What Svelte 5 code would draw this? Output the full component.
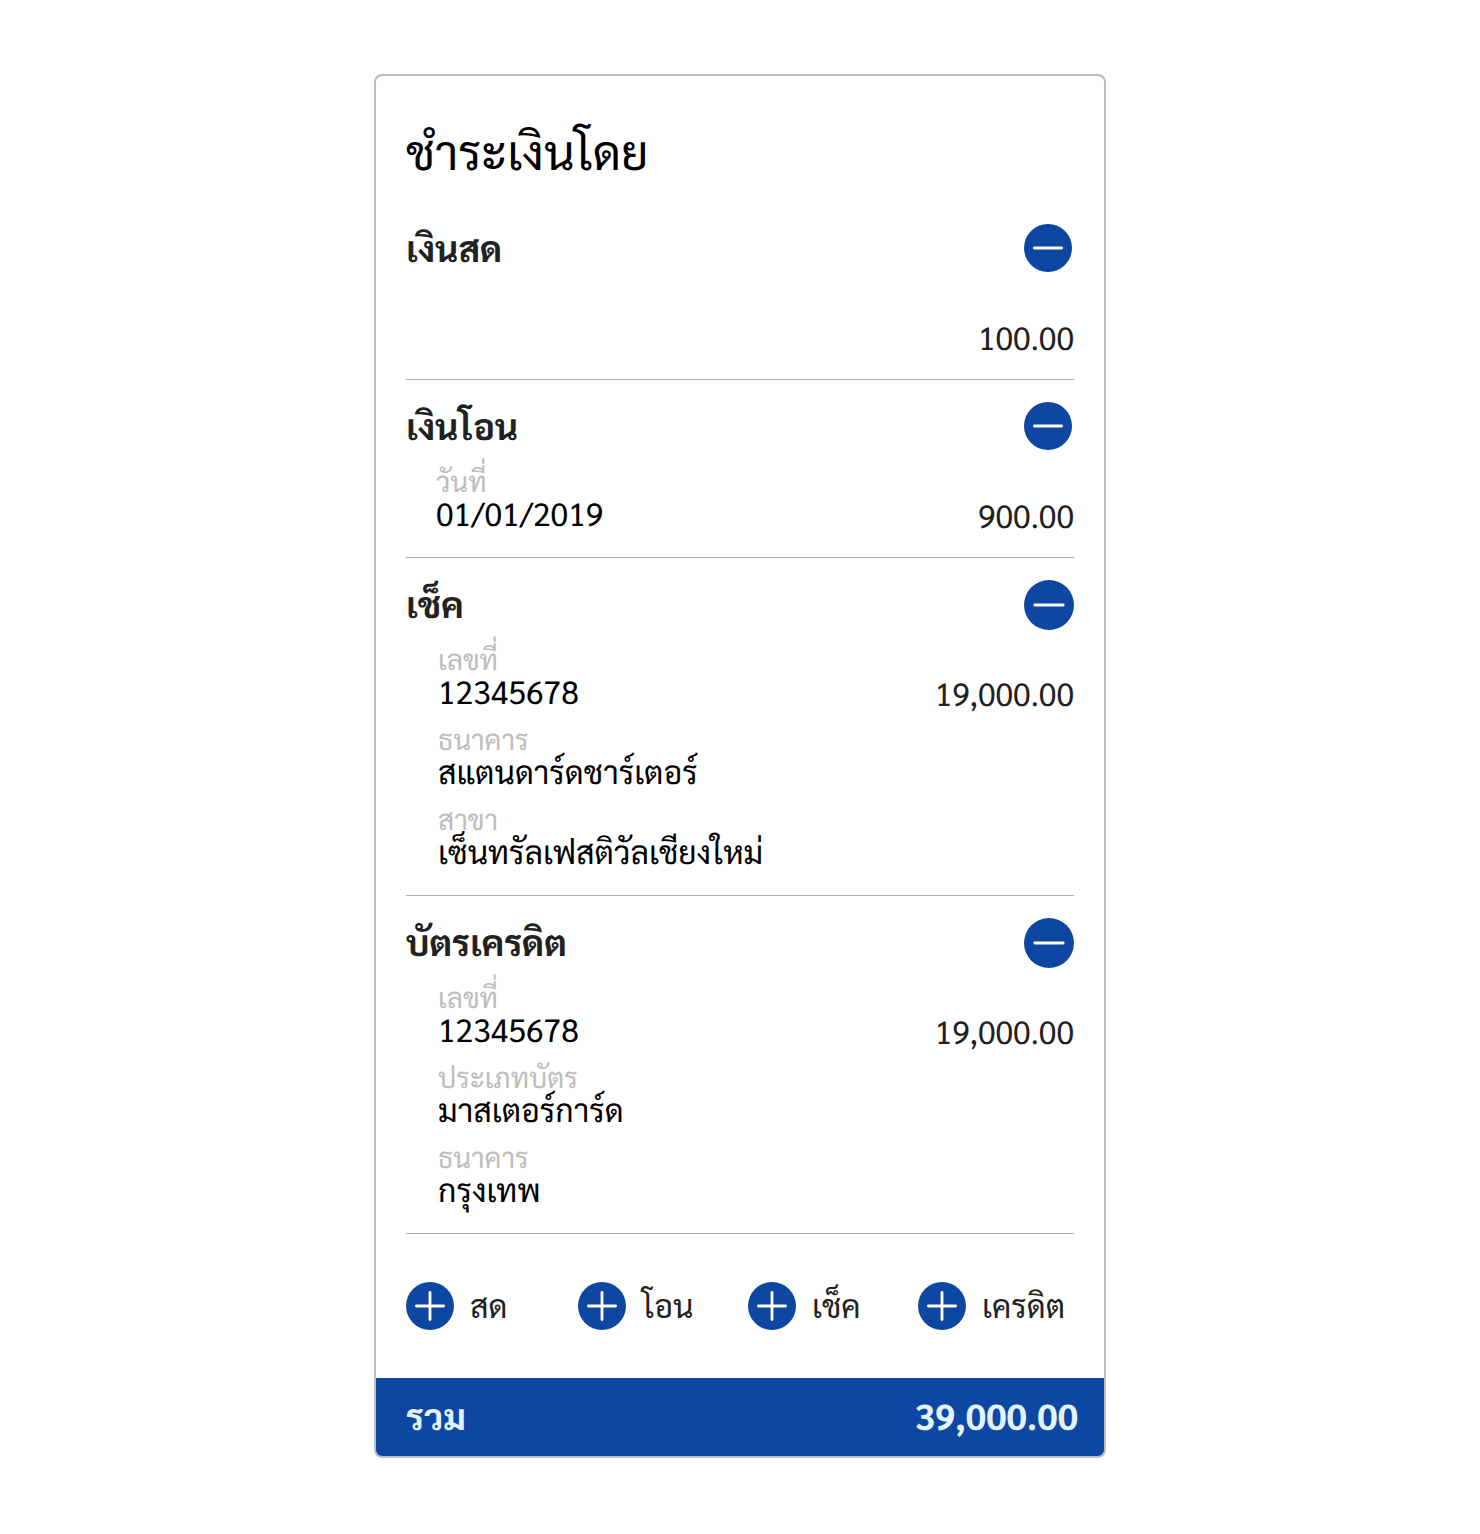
<script>
  const sections = [
    { title: 'เงินสด', kind: 'cash', amount: '100.00', size: 48, fields: [] },
    {
      title: 'เงินโอน', kind: 'transfer', amount: '900.00', size: 48,
      fields: [{ label: 'วันที่', value: '01/01/2019' }]
    },
    {
      title: 'เช็ค', kind: 'cheque', amount: '19,000.00', size: 50,
      fields: [
        { label: 'เลขที่', value: '12345678' },
        { label: 'ธนาคาร', value: 'สแตนดาร์ดชาร์เตอร์' },
        { label: 'สาขา', value: 'เซ็นทรัลเฟสติวัลเชียงใหม่' }
      ]
    },
    {
      title: 'บัตรเครดิต', kind: 'credit', amount: '19,000.00', size: 50,
      fields: [
        { label: 'เลขที่', value: '12345678' },
        { label: 'ประเภทบัตร', value: 'มาสเตอร์การ์ด' },
        { label: 'ธนาคาร', value: 'กรุงเทพ' }
      ]
    }
  ];
  const actions = ['สด', 'โอน', 'เช็ค', 'เครดิต'];
</script>

{#snippet icon(plus, size)}
  <svg width={size} height={size} viewBox="0 0 48 48" aria-hidden="true">
    <circle cx="24" cy="24" r="24" fill="#0d47a1" />
    <path d={plus ? 'M10.4 24H37.6M24 10.4V37.6' : 'M10.4 24H37.6'} stroke="#fff" stroke-width="2.8" stroke-linecap="round" />
  </svg>
{/snippet}

<main class="page">
  <div class="card">
    <h1>ชำระเงินโดย</h1>
    {#each sections as s}
      <section class={s.kind}>
        <header>
          <h2>{s.title}</h2>
          <button class="round" class:small={s.size === 48} aria-label="ลบ">{@render icon(false, s.size)}</button>
        </header>
        <div class="body">
          <dl>
            {#each s.fields as f}
              <div class="field">
                <dt>{f.label}</dt>
                <dd>{f.value}</dd>
              </div>
            {/each}
          </dl>
          <span class="amount">{s.amount}</span>
        </div>
      </section>
    {/each}
    <nav>
      {#each actions as a}
        <button class="add">{@render icon(true, 48)}<span>{a}</span></button>
      {/each}
    </nav>
    <footer><span>รวม</span><span>39,000.00</span></footer>
  </div>
</main>

<style>
  :global(body) { margin: 0; background: #fff; }
  .page {
    box-sizing: border-box;
    height: 1534px;
    padding-top: 74px;
    font-family: Sarabun, "Noto Sans Thai Looped", "Noto Sans Thai", "Noto Sans CJK SC", sans-serif;
    color: #212121;
    text-rendering: geometricPrecision;
  }
  .card {
    box-sizing: border-box;
    width: 732px;
    height: 1384px;
    margin: 0 auto;
    border: 2px solid #bdbdbd;
    border-radius: 8px;
    overflow: hidden;
    white-space: nowrap;
  }
  h1, h2, dl, dd { margin: 0; }
  button { border: 0; padding: 0; background: none; font: inherit; color: inherit; }
  svg { display: block; }
  h1 {
    height: 126px;
    padding-left: 30px;
    box-sizing: border-box;
    color: #000;
    font-size: 48px;
    font-weight: 400;
    line-height: 150px;
  }
  section {
    box-sizing: border-box;
    margin: 0 30px;
    height: 178px;
    padding-top: 22px;
    border-bottom: 1px solid #b0b0b0;
  }
  .cheque, .credit { height: 338px; }
  header { display: flex; justify-content: space-between; align-items: flex-start; height: 50px; }
  h2 { font-size: 36px; line-height: 48px; font-weight: 700; }
  .small { margin-right: 2px; }
  .body { display: flex; justify-content: space-between; }
  dl { padding-left: 32px; }
  .transfer dl { padding-left: 30px; }
  .field { height: 80px; }
  dt { height: 32px; line-height: 58px; font-size: 28px; color: #bdbdbd; }
  dd { height: 48px; line-height: 60px; font-size: 32px; color: #000; }
  .amount { font-size: 32px; line-height: 128px; height: 80px; }
  nav {
    display: grid;
    grid-template-columns: 172px 170px 170px auto;
    height: 144px;
    padding-left: 30px;
    align-items: center;
  }
  .add { display: flex; align-items: center; gap: 16px; height: 48px; font-size: 32px; }
  .add span { height: 48px; line-height: 46px; }
  footer {
    display: flex;
    justify-content: space-between;
    height: 78px;
    padding: 0 26px 0 30px;
    background: #0d47a1;
    color: #e3f2fd;
    font-weight: 700;
    line-height: 76px;
    font-size: 36px;
  }
</style>
